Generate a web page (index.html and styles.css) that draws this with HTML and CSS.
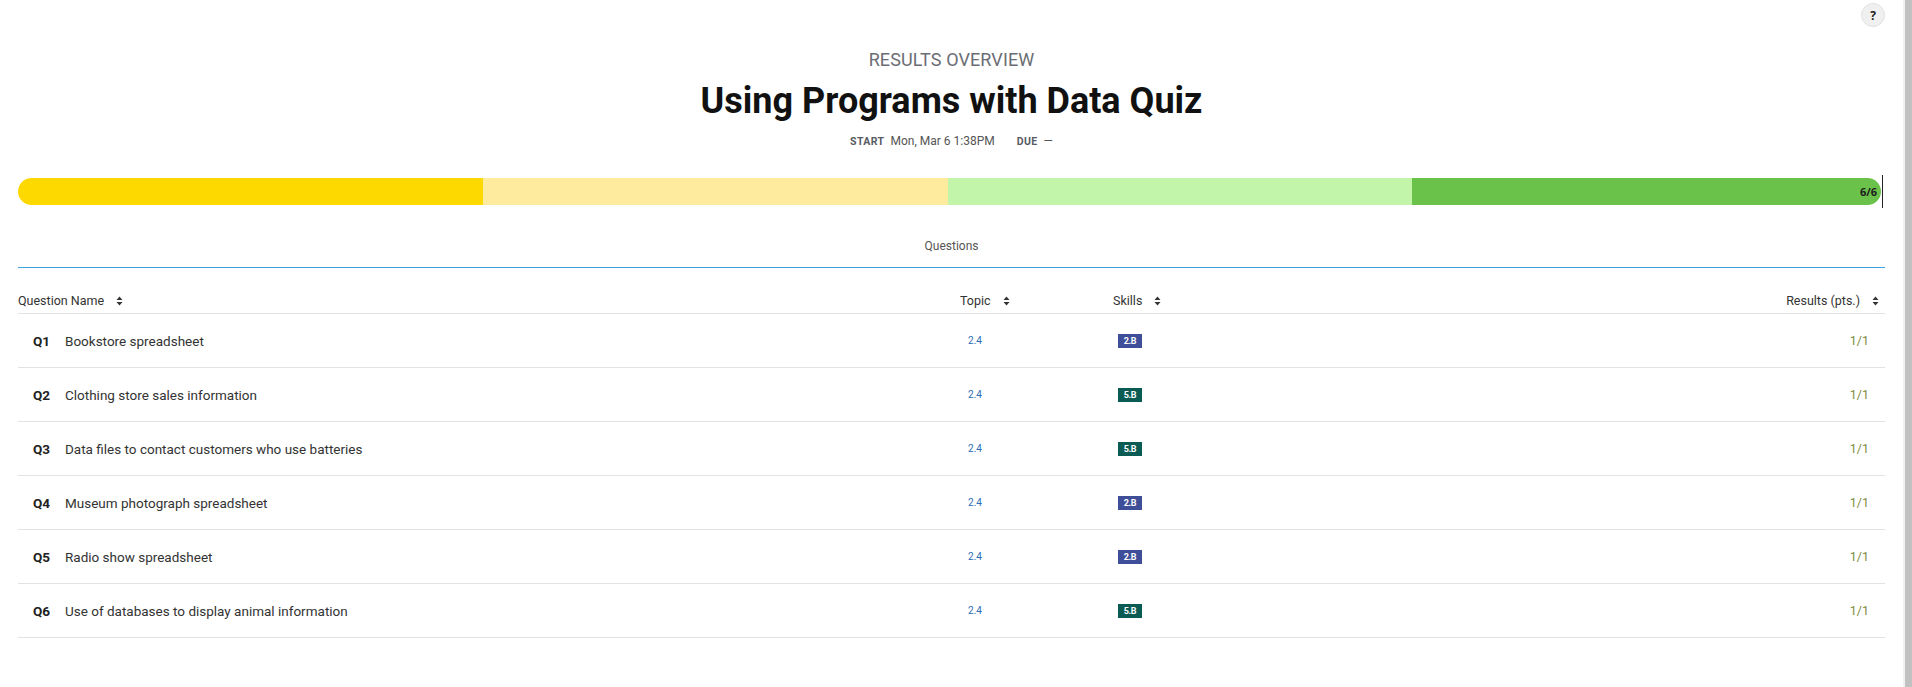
FILE: index.html
```html
<!DOCTYPE html>
<html>
<head>
<meta charset="utf-8">
<link rel="stylesheet" href="styles.css">
</head>
<body>
<main class="page">
  <div class="topbar"><button class="help">?</button></div>
  <header class="heading">
    <div class="eyebrow">RESULTS OVERVIEW</div>
    <h1 class="title">Using Programs with Data Quiz</h1>
    <div class="meta">
      <span class="meta-label">START</span><span class="meta-value">Mon, Mar 6 1:38PM</span>
      <span class="meta-label due">DUE</span><span class="meta-value">—</span>
    </div>
  </header>
  <div class="progress-wrap">
    <div class="progress">
      <div class="seg seg1"></div>
      <div class="seg seg2"></div>
      <div class="seg seg3"></div>
      <div class="seg seg4"><span class="score">6/6</span></div>
    </div>
    <div class="caret"></div>
  </div>
  <nav class="tabs"><span class="tab">Questions</span></nav>
  <div class="table">
    <div class="row head">
      <div class="cell c-name"><span>Question Name</span><svg class="sort" viewBox="0 0 7 10"><path d="M3.5 0.5L6.5 4H0.5Z M0.5 6H6.5L3.5 9.5Z"/></svg></div>
      <div class="cell c-topic h-topic"><span>Topic</span><svg class="sort" viewBox="0 0 7 10"><path d="M3.5 0.5L6.5 4H0.5Z M0.5 6H6.5L3.5 9.5Z"/></svg></div>
      <div class="cell c-skill h-skill"><span>Skills</span><svg class="sort" viewBox="0 0 7 10"><path d="M3.5 0.5L6.5 4H0.5Z M0.5 6H6.5L3.5 9.5Z"/></svg></div>
      <div class="cell c-res h-res"><span>Results (pts.)</span><svg class="sort" viewBox="0 0 7 10"><path d="M3.5 0.5L6.5 4H0.5Z M0.5 6H6.5L3.5 9.5Z"/></svg></div>
    </div>
    <div class="row">
      <div class="cell c-name"><span class="qnum">Q1</span><span class="qname">Bookstore spreadsheet</span></div>
      <div class="cell c-topic"><span class="topic">2.4</span></div>
      <div class="cell c-skill"><span class="badge b-2b">2.B</span></div>
      <div class="cell c-res"><span class="pts">1/1</span></div>
    </div>
    <div class="row">
      <div class="cell c-name"><span class="qnum">Q2</span><span class="qname">Clothing store sales information</span></div>
      <div class="cell c-topic"><span class="topic">2.4</span></div>
      <div class="cell c-skill"><span class="badge b-5b">5.B</span></div>
      <div class="cell c-res"><span class="pts">1/1</span></div>
    </div>
    <div class="row">
      <div class="cell c-name"><span class="qnum">Q3</span><span class="qname">Data files to contact customers who use batteries</span></div>
      <div class="cell c-topic"><span class="topic">2.4</span></div>
      <div class="cell c-skill"><span class="badge b-5b">5.B</span></div>
      <div class="cell c-res"><span class="pts">1/1</span></div>
    </div>
    <div class="row">
      <div class="cell c-name"><span class="qnum">Q4</span><span class="qname">Museum photograph spreadsheet</span></div>
      <div class="cell c-topic"><span class="topic">2.4</span></div>
      <div class="cell c-skill"><span class="badge b-2b">2.B</span></div>
      <div class="cell c-res"><span class="pts">1/1</span></div>
    </div>
    <div class="row">
      <div class="cell c-name"><span class="qnum">Q5</span><span class="qname">Radio show spreadsheet</span></div>
      <div class="cell c-topic"><span class="topic">2.4</span></div>
      <div class="cell c-skill"><span class="badge b-2b">2.B</span></div>
      <div class="cell c-res"><span class="pts">1/1</span></div>
    </div>
    <div class="row">
      <div class="cell c-name"><span class="qnum">Q6</span><span class="qname">Use of databases to display animal information</span></div>
      <div class="cell c-topic"><span class="topic">2.4</span></div>
      <div class="cell c-skill"><span class="badge b-5b">5.B</span></div>
      <div class="cell c-res"><span class="pts">1/1</span></div>
    </div>
  </div>
</main>
<aside class="scrollbar"><div class="thumb"></div></aside>
</body>
</html>
```
FILE: styles.css
```css
* { box-sizing: border-box; }
html, body { margin: 0; height: 100%; }
body {
  display: flex;
  height: 687px;
  overflow: hidden;
  background: #fff;
  font-family: Roboto, "Liberation Sans", sans-serif;
  color: #333;
}
.page {
  flex: 1;
  min-width: 0;
  padding: 0 18px;
}
.scrollbar {
  width: 9px;
  background: #f1f1f1;
  display: flex;
  justify-content: flex-end;
}
.thumb {
  width: 7px;
  height: 100%;
  background: #c1c1c1;
}
.topbar {
  display: flex;
  justify-content: flex-end;
  padding-top: 3px;
}
.help {
  width: 24px;
  height: 24px;
  border-radius: 50%;
  border: 1px solid #e2e2e2;
  background: #f0f0f0;
  font-family: "Open Sans", Roboto, sans-serif;
  font-weight: 700;
  font-size: 12px;
  color: #222;
  padding: 0;
  display: flex;
  align-items: center;
  justify-content: center;
}
.heading {
  text-align: center;
  margin-top: 22px;
}
.eyebrow {
  font-size: 18px;
  line-height: 22px;
  color: #6b6d74;
  letter-spacing: 0.1px;
}
.title {
  margin: 10px 0 0;
  font-size: 36px;
  line-height: 40px;
  font-weight: 700;
  color: #111;
}
.meta {
  margin-top: 13px;
  line-height: 14px;
  display: flex;
  justify-content: center;
  align-items: baseline;
  color: #555;
}
.meta-label {
  font-size: 10.5px;
  font-weight: 700;
  color: #575b63;
  margin-right: 6px;
  letter-spacing: 0.4px;
}
.meta-label.due { margin-left: 22px; }
.meta-value { font-size: 12px; color: #555; }
.progress-wrap {
  margin-top: 26px;
  height: 33px;
  display: flex;
  align-items: center;
}
.progress {
  flex: 1;
  height: 27px;
  display: flex;
  border-radius: 14px;
  overflow: hidden;
}
.seg { flex: 1; }
.seg1 { background: #fdd900; }
.seg2 { background: #feeb9e; }
.seg3 { background: #c2f4aa; }
.seg4 {
  background: #6bc24a;
  display: flex;
  align-items: center;
  justify-content: flex-end;
  padding-right: 4px;
}
.score {
  font-family: "Open Sans", Roboto, sans-serif;
  font-size: 11px;
  font-weight: 700;
  color: #1d1d1d;
}
.caret {
  width: 1px;
  height: 33px;
  background: #222;
  margin: 0 2px 0 1px;
}
.tabs {
  margin-top: 29px;
  padding-bottom: 13px;
  border-bottom: 1px solid #3aa3e0;
  text-align: center;
  line-height: 16px;
}
.tab {
  font-size: 12px;
  color: #555;
}
.row {
  display: grid;
  grid-template-columns: 912px 90px 220px 1fr;
  height: 54px;
  border-bottom: 1px solid #e2e2e2;
  align-items: center;
}
.row.head {
  height: 46px;
  align-items: end;
  padding-bottom: 4px;
  font-size: 12.5px;
  line-height: 16px;
  color: #333;
}
.cell { display: flex; align-items: center; }
.c-topic, .c-skill { justify-content: center; }
.c-res { justify-content: flex-end; }
.head .cell { justify-content: flex-start; }
.head .h-topic { padding-left: 30px; }
.head .h-skill { padding-left: 93px; }
.head .h-res { justify-content: flex-end; padding-right: 6px; }
.sort {
  width: 7px;
  height: 10px;
  margin-left: 12px;
  fill: #333;
}
.qnum {
  width: 47px;
  padding-left: 15px;
  font-weight: 700;
  font-size: 13.5px;
  color: #222;
}
.qname {
  font-size: 13.5px;
  color: #333;
}
.topic {
  font-size: 10px;
  color: #2c6cb5;
}
.badge {
  width: 24px;
  height: 14px;
  display: flex;
  align-items: center;
  justify-content: center;
  font-size: 9px;
  font-weight: 700;
  color: #fff;
  letter-spacing: -0.4px;
}
.b-2b { background: #3f4e98; }
.b-5b { background: #0b5b55; }
.pts {
  font-size: 12.5px;
  color: #7e8d3c;
  padding-right: 16px;
}
```
